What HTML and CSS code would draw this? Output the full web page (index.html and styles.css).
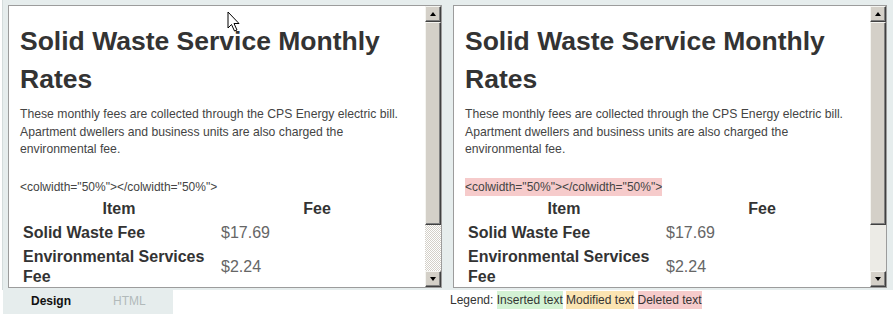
FILE: index.html
```html
<!DOCTYPE html>
<html lang="en">
<head>
    <meta charset="UTF-8">
    <title>Compare Versions</title>
    <link rel="stylesheet" href="styles.css">
</head>
<body>
    <div class="editor">
        <div class="pane">
            <div class="content">
                <h1>Solid Waste Service Monthly Rates</h1>
                <p>These monthly fees are collected through the CPS Energy electric bill. Apartment dwellers and business units are also charged the environmental fee.</p>
                <div class="colwidth"><span>&lt;colwidth="50%"&gt;&lt;/colwidth="50%"&gt;</span></div>
                <table class="rates">
                    <tr><th>Item</th><th>Fee</th></tr>
                    <tr><td class="label">Solid Waste Fee</td><td>$17.69</td></tr>
                    <tr><td class="label">Environmental Services Fee</td><td>$2.24</td></tr>
                </table>
            </div>
            <div class="scrollbar checkered">
                <div class="btn up"></div>
                <div class="thumb"></div>
                <div class="track"></div>
                <div class="btn down"></div>
            </div>
        </div>
        <div class="pane">
            <div class="content">
                <h1>Solid Waste Service Monthly Rates</h1>
                <p>These monthly fees are collected through the CPS Energy electric bill. Apartment dwellers and business units are also charged the environmental fee.</p>
                <div class="colwidth"><span class="deleted">&lt;colwidth="50%"&gt;&lt;/colwidth="50%"&gt;</span></div>
                <table class="rates">
                    <tr><th>Item</th><th>Fee</th></tr>
                    <tr><td class="label">Solid Waste Fee</td><td>$17.69</td></tr>
                    <tr><td class="label">Environmental Services Fee</td><td>$2.24</td></tr>
                </table>
            </div>
            <div class="scrollbar">
                <div class="btn up"></div>
                <div class="thumb"></div>
                <div class="track"></div>
                <div class="btn down"></div>
            </div>
        </div>
    </div>

    <div class="footer">
        <div class="tabs">
            <span class="tab active">Design</span>
            <span class="tab">HTML</span>
        </div>
        <div class="legend">
            Legend: <span class="inserted">Inserted text</span> <span class="modified">Modified text</span> <span class="deleted">Deleted text</span>
        </div>
    </div>

    <svg class="cursor" width="14" height="22" viewBox="0 0 14 22">
        <path d="M1 1 L1 17 L4.5 13.5 L7.5 20 L10 19 L7 12.5 L12 12.5 Z" fill="#fff" stroke="#000" stroke-width="1" stroke-linejoin="round"/>
    </svg>
</body>
</html>
```

FILE: styles.css
```css
body {
    margin: 0;
    background-color: #fff;
    font-family: "Liberation Sans", Arial, sans-serif;
    color: #333;
}
.editor {
    display: flex;
    gap: 11px;
    margin-left: 2px;
    padding: 5px 6px 2px 5px;
    border-left: 1px solid #d4dcdc;
    background-color: #e6eded;
}
.pane {
    display: flex;
    width: 434px;
    height: 283px;
    box-sizing: border-box;
    border: 1px solid #9c9c9c;
    background-color: #fff;
}
.content {
    flex: 1;
    overflow: hidden;
    padding: 0 9px 0 11px;
}
.content h1 {
    margin: 16px 0 8px;
    font-size: 26.5px;
    line-height: 38px;
    color: #333;
}
.content p {
    margin: 0 0 21px;
    font-size: 12.2px;
    line-height: 17.5px;
    color: #444;
}
.colwidth {
    font-size: 12px;
    line-height: 15px;
    color: #444;
}
.colwidth span {
    padding: 2px 0;
}
.rates {
    width: 100%;
    margin-top: 2px;
    border-collapse: collapse;
    table-layout: fixed;
    font-size: 16px;
    line-height: 20px;
}
.rates th,
.rates td {
    padding: 2px 3px;
    vertical-align: middle;
}
.rates th {
    text-align: center;
    color: #333;
}
.rates td {
    color: #666;
}
.rates td.label {
    font-weight: bold;
    color: #333;
}
.scrollbar {
    display: flex;
    flex-direction: column;
    width: 16px;
    flex-shrink: 0;
    background-color: #ecebe6;
}
.scrollbar.checkered .track {
    background: repeating-conic-gradient(#fff 0 25%, #d4d0c8 0 50%) 0 0 / 2px 2px;
}
.btn,
.thumb {
    box-sizing: border-box;
    background-color: #d4d0c8;
    border-top: 1px solid #f4f4f0;
    border-left: 1px solid #f4f4f0;
    border-right: 1px solid #404040;
    border-bottom: 1px solid #404040;
    box-shadow: inset -1px -1px 0 #808080;
}
.btn {
    height: 16px;
    position: relative;
}
.btn::after {
    content: "";
    position: absolute;
    left: 4px;
    top: 5px;
    border-left: 3.5px solid transparent;
    border-right: 3.5px solid transparent;
}
.btn.up::after {
    border-bottom: 4px solid #000;
}
.btn.down::after {
    border-top: 4px solid #000;
}
.thumb {
    height: 203px;
}
.track {
    flex: 1;
}
.footer {
    display: flex;
    align-items: flex-start;
}
.tabs {
    display: flex;
    gap: 42px;
    width: 170px;
    height: 24px;
    box-sizing: border-box;
    margin-left: 3px;
    padding: 4px 0 0 28px;
    background-color: #e6eded;
    font-size: 12px;
    line-height: 14px;
}
.tab {
    color: #b2baba;
}
.tab.active {
    font-weight: bold;
    color: #111;
}
.legend {
    margin-left: 277px;
    padding-top: 3px;
    font-size: 12px;
    line-height: 14px;
    color: #333;
}
.legend span {
    padding: 2px 0;
}
.inserted {
    background-color: #d4f2d4;
}
.modified {
    background-color: #fbe4b2;
}
.deleted {
    background-color: #f6cbcb;
}
.cursor {
    position: absolute;
    left: 227px;
    top: 11px;
}
```
